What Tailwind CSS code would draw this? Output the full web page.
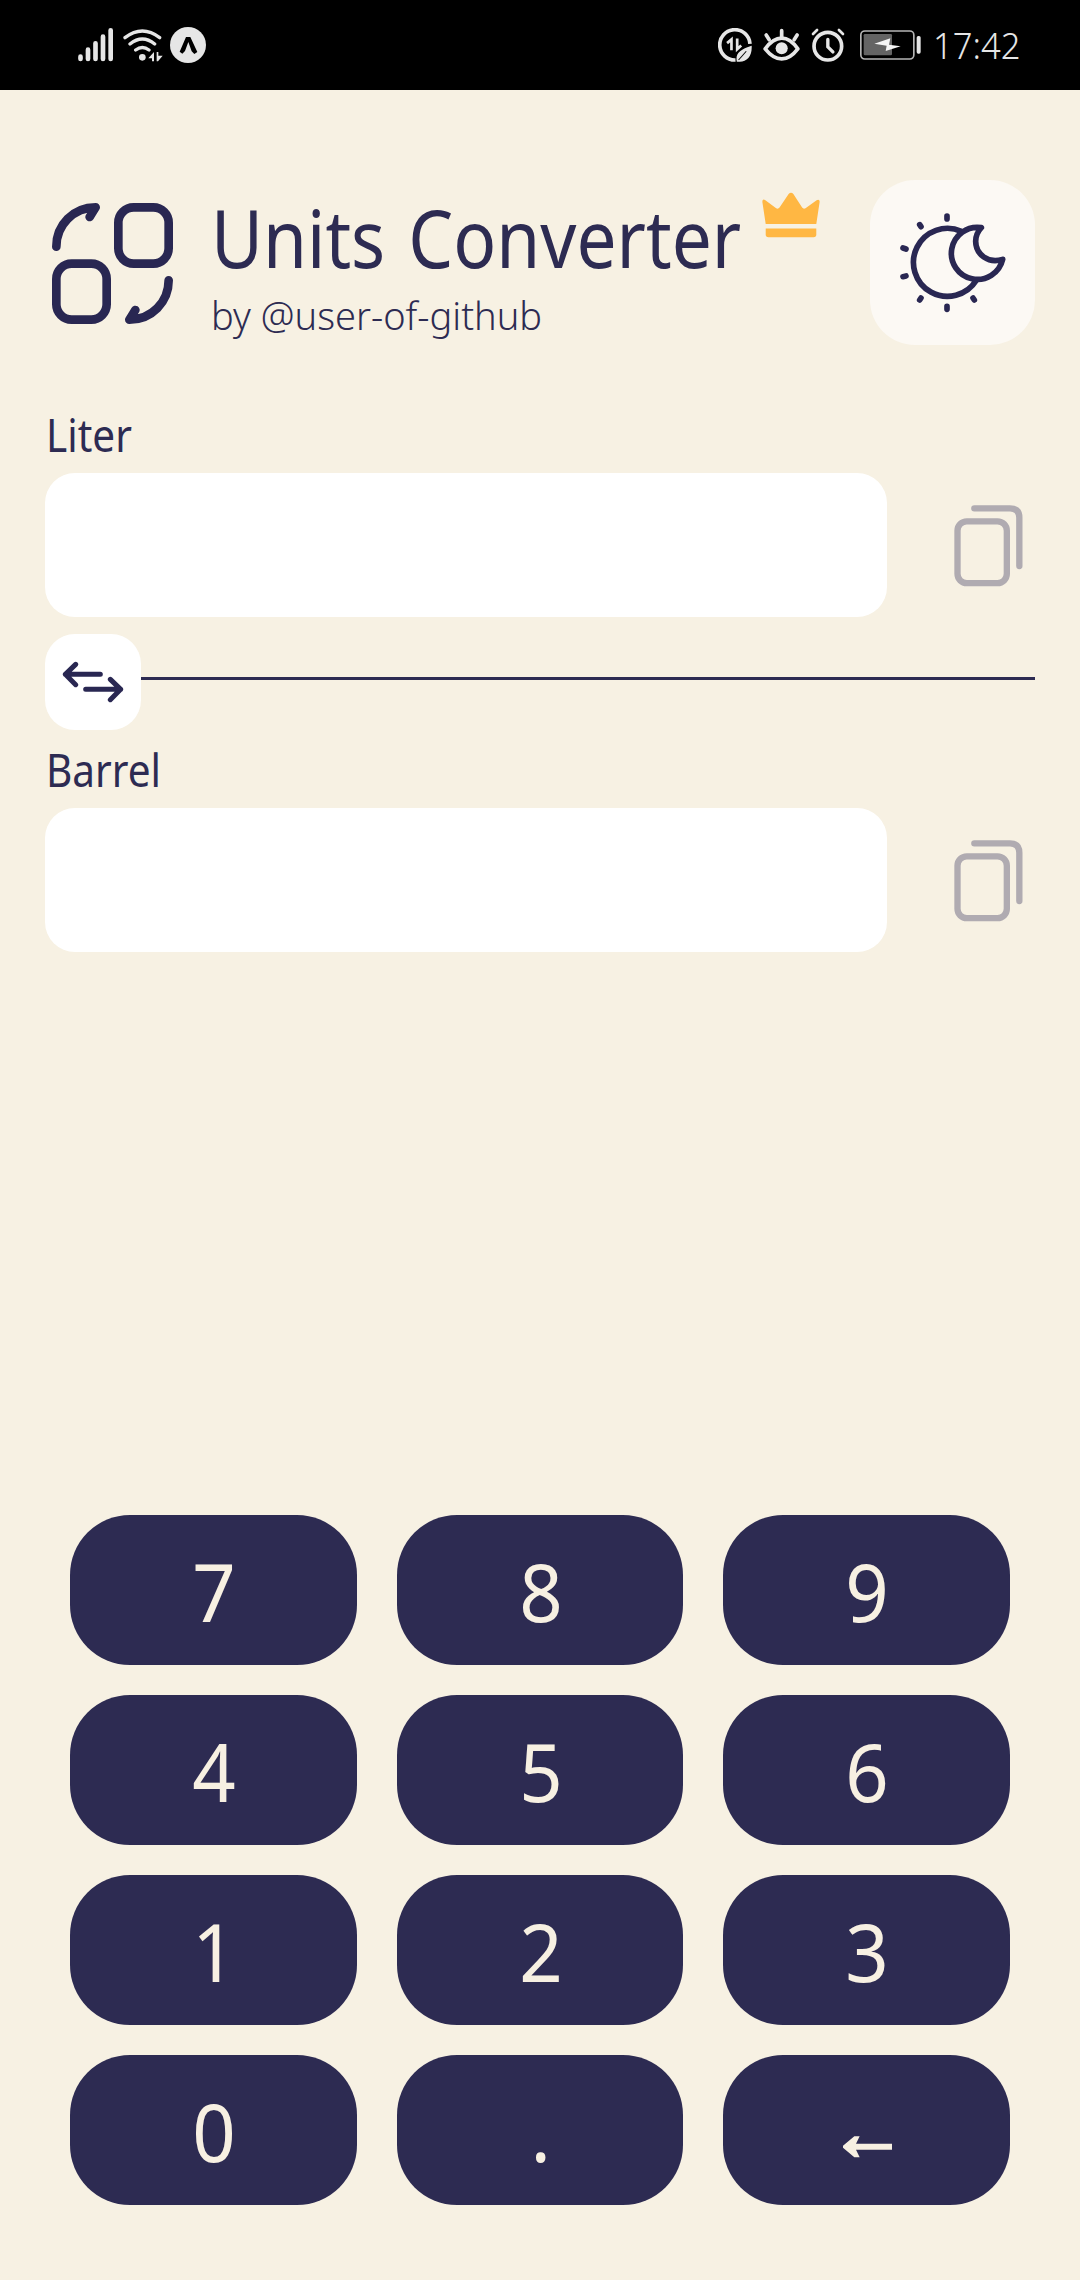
<!DOCTYPE html>
<html lang="en">
<head>
<meta charset="utf-8">
<title>Units Converter</title>
<script src="https://cdn.jsdelivr.net/npm/@tailwindcss/browser@4"></script>
</head>
<body class="flex h-[2280px] w-[1080px] flex-col overflow-hidden bg-[#f7f1e3] font-['Noto_Sans',sans-serif] text-[#2d2b52]">

<!-- Status bar -->
<div class="flex h-[90px] shrink-0 items-center justify-between bg-black pr-[60px] pl-[78px]">
  <div class="flex items-center">
    <svg class="h-[34px] w-[35px]" viewBox="54 53 105 102" fill="none" stroke="#e6e6e6" stroke-width="14" stroke-linecap="round"><path d="M61.500 139v7M84 118v28M106.500 99v47M129 79v67M152 60v86"/></svg>
    <svg class="ml-[10px] h-[34px] w-[40px]" viewBox="188 53 120 102" fill="none" stroke="#e6e6e6" stroke-width="10" stroke-linecap="round"><path d="M194 82Q246 42 298 82M209 101Q246 71 283 101M226 119Q246 104 266 119"/><circle cx="246" cy="141" r="10" fill="#e6e6e6" stroke="none"/><path d="M281 125v28h-6v-9h-11zM289 125v28h4l14-17h-13v-11z" fill="#e6e6e6" stroke="none"/></svg>
    <svg class="ml-[7px] h-[36px] w-[36px]" viewBox="330 51 108 108"><circle cx="384" cy="105" r="54" fill="#e6e6e6"/><path d="M378 81h13l21 45-9 6-8-8-10-28-10 27-8 8-8-6z" fill="#000"/></svg>
  </div>
  <div class="flex items-center">
    <svg class="h-[34px] w-[34px]" viewBox="56 56 101 101" fill="none" stroke="#e6e6e6"><path d="M151 103A45 45 0 1 0 108 151" stroke-width="11"/><path d="M83 101l13-11v32M113 87v32l12-11" stroke-width="8"/><path d="M112 156c-5-23 8-36 44-47 2 32-15 49-39 47z" fill="#e6e6e6" stroke="none"/><path d="M117 151l23-26" stroke="#000" stroke-width="3"/></svg>
    <svg class="ml-[11px] h-[34px] w-[37px]" viewBox="191 56 109 101" fill="none" stroke="#e6e6e6" stroke-width="11" stroke-linecap="round" stroke-linejoin="round"><path d="M197 118Q220 86 246 86T294 118Q271 148 246 148T197 118z"/><circle cx="246" cy="116" r="18" fill="#e6e6e6" stroke="none"/><path d="M246 64v20M200 77l9 14M292 77l-9 14"/></svg>
    <svg class="ml-[11px] h-[34px] w-[34px]" viewBox="335 56 101 101" fill="none" stroke="#e6e6e6" stroke-linecap="round"><circle cx="385" cy="110" r="41" stroke-width="11"/><path d="M385 90v22l15 15" stroke-width="10"/><path d="M341 74l12-12M430 74l-12-12" stroke-width="8"/></svg>
    <svg class="ml-[15px] h-[30px] w-[62px]" viewBox="481 62 186 90"><rect x="483.500" y="65" width="159" height="84" rx="12" fill="none" stroke="#b5b5b5" stroke-width="5"/><rect x="492" y="74" width="85" height="64" rx="4" fill="#646464"/><path d="M524 103l48-16-4 19 35 5-45 14 3-16z" fill="#f5f5f5"/><rect x="651" y="80" width="12" height="53" rx="5" fill="#e6e6e6"/></svg>
    <span class="mt-[2px] ml-[11px] inline-block w-[87px] origin-left scale-x-[0.96] text-[36px] leading-none font-light whitespace-nowrap text-[#e6e6e6]">17:42</span>
  </div>
</div>

<!-- Header -->
<header class="mt-[90px] flex h-[165px] shrink-0 px-[45px]">
  <svg class="mt-[23px] ml-[7px] h-[121px] w-[121px] shrink-0" viewBox="66 69 363 363" fill="none" stroke="#292752" stroke-width="26" stroke-linecap="round" stroke-linejoin="round"><rect x="265" y="82" width="151" height="169" rx="46"/><rect x="79" y="251" width="151" height="168" rx="46"/><path d="M79 200C79 135 130 82 197 82L179 111M416 301C416 366 365 419 298 419L316 390"/></svg>
  <div class="ml-[38px] w-[540px] shrink-0">
    <h1 class="mt-[12px] inline-block origin-left scale-x-[0.89] text-[80px] leading-[90px] [word-spacing:5px] whitespace-nowrap">Units Converter</h1>
    <p class="mt-[7px] w-max origin-left text-[38px] leading-[52px] font-light whitespace-nowrap">by @user-of-github</p>
  </div>
  <svg class="mt-[12px] ml-[11px] h-[46px] w-[58px] shrink-0" viewBox="1087 67 172 136" fill="#ffb743"><path d="M1098 162L1088 96Q1088 86 1097 91L1129 115Q1135 118 1139 113L1166 73Q1173 65 1180 73L1206 113Q1210 118 1216 115L1249 91Q1258 87 1258 96L1248 162z"/><path d="M1098 175h150v18q0 8-8 8h-134q-8 0-8-8z"/></svg>
  <button class="ml-auto flex size-[165px] shrink-0 rounded-[45px] bg-[#fcf9f4]">
    <svg class="mt-[30px] ml-[27px] h-[107px] w-[113px]" viewBox="141 150 339 321" fill="none" stroke="#292752" stroke-width="17" stroke-linecap="round" stroke-linejoin="round"><path d="M334 214A102 102 0 1 0 379 361"/><path d="M394 203A78 78 0 1 0 458 298C415 312 377 283 377 244Q377 221 394 203z"/><path d="M291 168v9M291 439v9M209 194l4 6M209 420l4-6M369 414l4 6M159 264l9 3M159 350l9-2"/></svg>
  </button>
</header>

<!-- Converter -->
<main class="flex shrink-0 flex-col px-[45px] pt-[60px]">
  <label class="ml-px w-max origin-left scale-x-[0.9] text-[45px] leading-[60px]">Liter</label>
  <div class="mt-[8px] flex items-center">
    <div class="h-[144px] w-[842px] rounded-[30px] bg-white"></div>
    <svg class="mt-px ml-[67px] h-[82px] w-[69px]" viewBox="281 134 207 246" fill="none" stroke="#b0abb1" stroke-width="19" stroke-linecap="round"><rect x="291.500" y="183" width="148" height="185.500" rx="28"/><path d="M342 144H449Q477 144 477 172V317"/></svg>
  </div>
  <div class="mt-[17px] flex h-[96px] items-center">
    <button class="flex size-[96px] items-center justify-center rounded-[30px] bg-white">
      <svg class="h-[42px] w-[62px]" viewBox="96 783 186 126" fill="none" stroke="#292752" stroke-width="15" stroke-linecap="round" stroke-linejoin="round"><path d="M211 823H106M137 793l-31 30 31 31M167 868H272M241 838l31 30-31 31"/></svg>
    </button>
    <div class="mb-[7px] h-[3px] flex-1 bg-[#2d2b52]"></div>
  </div>
  <label class="mt-[10px] ml-px w-max origin-left scale-x-[0.9] text-[45px] leading-[60px]">Barrel</label>
  <div class="mt-[8px] flex items-center">
    <div class="h-[144px] w-[842px] rounded-[30px] bg-white"></div>
    <svg class="mt-px ml-[67px] h-[82px] w-[69px]" viewBox="281 134 207 246" fill="none" stroke="#b0abb1" stroke-width="19" stroke-linecap="round"><rect x="291.500" y="183" width="148" height="185.500" rx="28"/><path d="M342 144H449Q477 144 477 172V317"/></svg>
  </div>
</main>

<!-- Keypad -->
<div class="mt-auto mb-[75px] grid shrink-0 grid-cols-3 gap-x-[40px] gap-y-[30px] px-[70px] text-[80px] leading-none text-[#f7f0e2] [&_span]:block [&_span]:scale-x-[0.95] [&>button]:flex [&>button]:h-[150px] [&>button]:items-center [&>button]:justify-center [&>button]:rounded-[60px] [&>button]:bg-[#2d2b52] [&>button]:pt-px [&>button]:pl-px">
  <button><span>7</span></button><button><span>8</span></button><button><span>9</span></button>
  <button><span>4</span></button><button><span>5</span></button><button><span>6</span></button>
  <button><span>1</span></button><button><span>2</span></button><button><span>3</span></button>
  <button><span>0</span></button><button><span>.</span></button>
  <button><svg class="mt-[33px] h-[22px] w-[49px]" viewBox="429 829 147 66" fill="#f7f0e2"><path d="M429 858L463 830H479L468 852H576V870H468L479 893H463L429 864z"/></svg></button>
</div>
</body>
</html>
